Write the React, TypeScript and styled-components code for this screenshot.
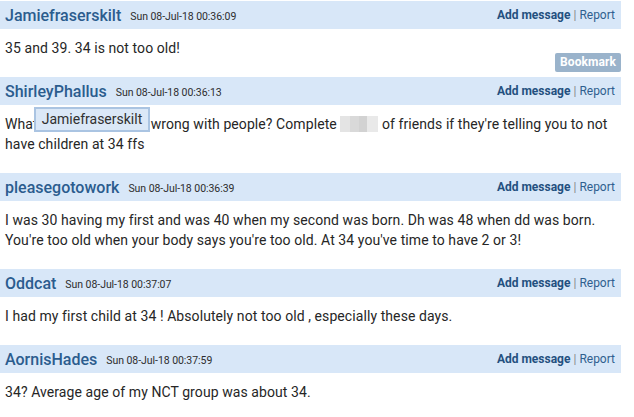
import React from "react";
import styled, { createGlobalStyle } from "styled-components";

const Global = createGlobalStyle`
  html, body { margin: 0; padding: 0; background: #ffffff; }
  body { font-family: Roboto, "Liberation Sans", Arial, sans-serif; }
`;

const Thread = styled.div`
  width: 621px;
  padding-top: 1px;
  display: flex;
  flex-direction: column;
`;

const Header = styled.div`
  height: 28px;
  background: #d8e7f8;
  display: flex;
  align-items: center;
  padding: 0 6px 0 5px;
`;

const Name = styled.span`
  font-size: 16px;
  font-weight: 500;
  color: #2b5c8e;
  margin-right: 9px;
`;

const Stamp = styled.span`
  font-size: 10.5px;
  letter-spacing: -0.05px;
  color: #2d2d2d;
  margin-top: 2px;
`;

const Actions = styled.div`
  margin-left: auto;
  font-size: 12px;
  color: #2f5f8f;
  display: flex;
  align-items: center;
  gap: 3px;
`;

const AddLink = styled.span`
  font-weight: 700;
  color: #24507f;
`;

const Pipe = styled.span`
  color: #8a8a8a;
`;

const Body = styled.div<{ $bottom?: number }>`
  position: relative;
  padding: 9px 5px ${(p) => (p.$bottom ?? 19)}px 5px;
  font-size: 14px;
  letter-spacing: 0.08px;
  line-height: 20px;
  color: #262626;
`;

const BookmarkRow = styled.div`
  display: flex;
  justify-content: flex-end;
  margin: -5px -5px 0 0;
`;

const Bookmark = styled.span`
  background: #9ab3cb;
  color: #ffffff;
  font-size: 12px;
  font-weight: 700;
  line-height: 19px;
  padding: 0 5px;
  border-radius: 2px;
`;

const Tooltip = styled.span`
  position: absolute;
  left: 34px;
  top: 2px;
  width: 112px;
  height: 21px;
  box-sizing: content-box;
  background: #dbe8f7;
  border: 2px solid #aac4e2;
  color: #303030;
  font-size: 14px;
  letter-spacing: 0;
  line-height: 21px;
  text-align: center;
`;

const Censor = styled.span`
  display: inline-block;
  width: 38px;
  height: 16px;
  vertical-align: -3px;
  background: linear-gradient(
    90deg,
    #e4e4e4 0 10px,
    #d9d9d9 10px 19px,
    #d2d2d2 19px 27px,
    #e9e9e9 27px 38px
  );
`;

type Post = {
  name: string;
  stamp: string;
  body: React.ReactNode;
  bookmark?: boolean;
  tooltip?: string;
};

const posts: Post[] = [
  {
    name: "Jamiefraserskilt",
    stamp: "Sun 08-Jul-18 00:36:09",
    body: "35 and 39. 34 is not too old!",
    bookmark: true,
  },
  {
    name: "ShirleyPhallus",
    stamp: "Sun 08-Jul-18 00:36:13",
    tooltip: "Jamiefraserskilt",
    body: (
      <>
        What the bloody hell is wrong with people? Complete <Censor /> of friends if they're telling you to not
        <br />
        have children at 34 ffs
      </>
    ),
  },
  {
    name: "pleasegotowork",
    stamp: "Sun 08-Jul-18 00:36:39",
    body: (
      <>
        I was 30 having my first and was 40 when my second was born. Dh was 48 when dd was born.
        <br />
        You're too old when your body says you're too old. At 34 you've time to have 2 or 3!
      </>
    ),
  },
  {
    name: "Oddcat",
    stamp: "Sun 08-Jul-18 00:37:07",
    body: "I had my first child at 34 ! Absolutely not too old , especially these days.",
  },
  {
    name: "AornisHades",
    stamp: "Sun 08-Jul-18 00:37:59",
    body: "34? Average age of my NCT group was about 34.",
  },
];

export default function App() {
  return (
    <>
      <Global />
      <Thread>
        {posts.map((p) => (
          <React.Fragment key={p.stamp}>
            <Header>
              <Name>{p.name}</Name>
              <Stamp>{p.stamp}</Stamp>
              <Actions>
                <AddLink>Add message</AddLink>
                <Pipe>|</Pipe>
                <span>Report</span>
              </Actions>
            </Header>
            <Body $bottom={p.bookmark ? 5 : 19}>
              {p.body}
              {p.tooltip && <Tooltip>{p.tooltip}</Tooltip>}
              {p.bookmark && (
                <BookmarkRow>
                  <Bookmark>Bookmark</Bookmark>
                </BookmarkRow>
              )}
            </Body>
          </React.Fragment>
        ))}
      </Thread>
    </>
  );
}
